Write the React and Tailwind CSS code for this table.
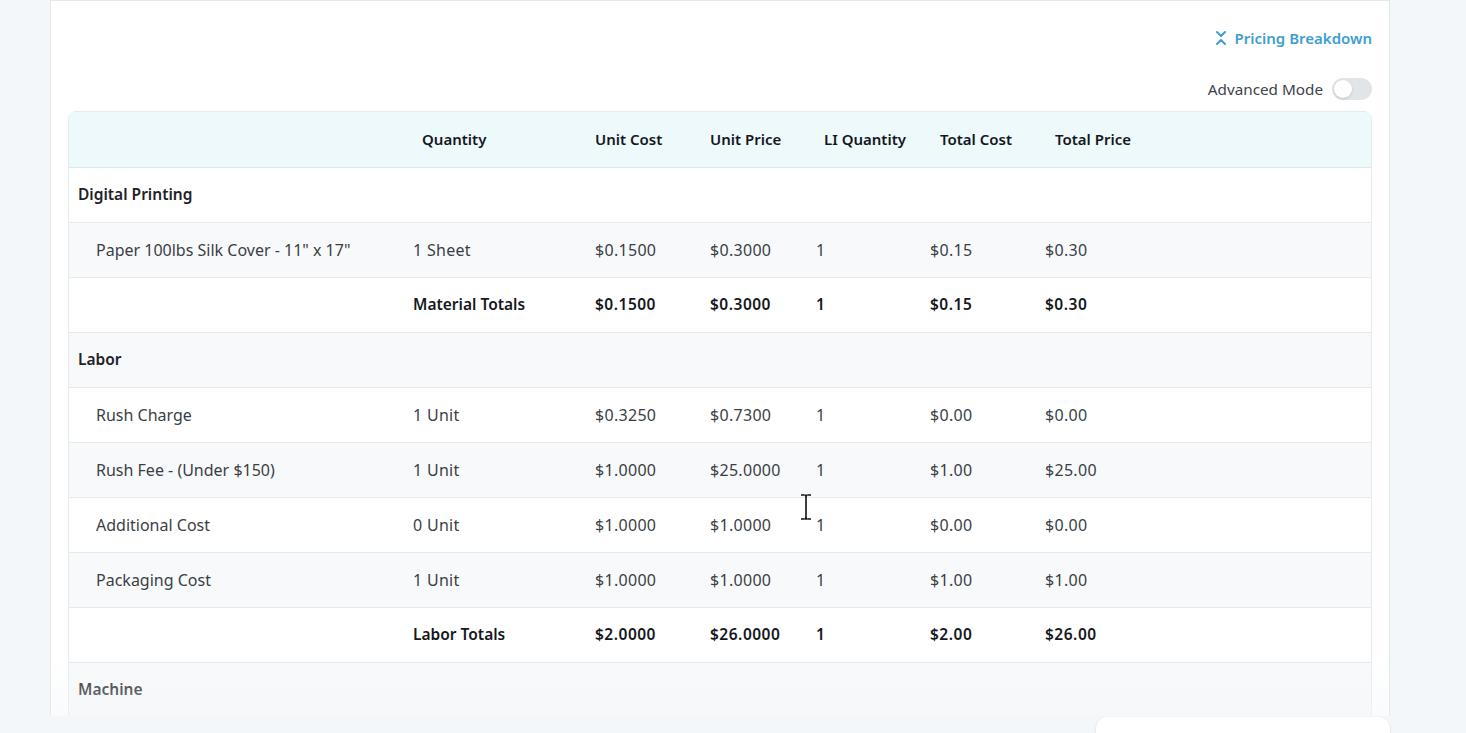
import React from "react";

const cols = "grid grid-cols-[334px_182px_115px_106px_114px_115px_1fr] content-center items-center";

const sections = [
  {
    title: "Digital Printing",
    items: [["Paper 100lbs Silk Cover - 11\" x 17\"", "1 Sheet", "$0.1500", "$0.3000", "1", "$0.15", "$0.30"]],
    total: ["Material Totals", "$0.1500", "$0.3000", "1", "$0.15", "$0.30"],
  },
  {
    title: "Labor",
    items: [
      ["Rush Charge", "1 Unit", "$0.3250", "$0.7300", "1", "$0.00", "$0.00"],
      ["Rush Fee - (Under $150)", "1 Unit", "$1.0000", "$25.0000", "1", "$1.00", "$25.00"],
      ["Additional Cost", "0 Unit", "$1.0000", "$1.0000", "1", "$0.00", "$0.00"],
      ["Packaging Cost", "1 Unit", "$1.0000", "$1.0000", "1", "$1.00", "$1.00"],
    ],
    total: ["Labor Totals", "$2.0000", "$26.0000", "1", "$2.00", "$26.00"],
  },
  { title: "Machine", items: [], total: null },
];

// flatten into rows so striping follows the row index
function buildRows() {
  const rows = [];
  sections.forEach((s) => {
    rows.push({ kind: "title", text: s.title });
    s.items.forEach((it) => rows.push({ kind: "item", cells: it }));
    if (s.total) rows.push({ kind: "total", cells: s.total });
  });
  return rows;
}

function Row({ row, index }) {
  const bg = index % 2 === 1 ? "bg-[#f8f9fa]" : "bg-white";
  if (row.kind === "title") {
    return (
      <div className={`${bg} h-[55px] flex items-center px-[9px] border-b border-[#e6eaed] font-semibold text-[15.5px] text-[#1e2227]`}>
        {row.text}
      </div>
    );
  }
  if (row.kind === "item") {
    return (
      <div className={`${cols} ${bg} h-[55px] border-b border-[#e6eaed] text-[16px] text-[#3a3f46]`}>
        <div className="pl-[27px]">{row.cells[0]}</div>
        {row.cells.slice(1).map((c, i) => (
          <div key={i} className="px-[10px] tracking-[0.3px]">{c}</div>
        ))}
        <div />
      </div>
    );
  }
  return (
    <div className={`${cols} ${bg} h-[55px] border-b border-[#e6eaed] font-semibold text-[15.5px] text-[#15181c]`}>
      <div />
      {row.cells.map((c, i) => (
        <div key={i} className={i === 0 ? "px-[10px]" : "px-[10px] tracking-[0.5px]"}>{c}</div>
      ))}
      <div />
    </div>
  );
}

export default function App() {
  const rows = buildRows();
  return (
    <div className="relative h-[733px] overflow-hidden bg-[#f3f7f9] font-['Noto_Sans',sans-serif] text-[15px]">
      <div className="relative ml-[50px] w-[1340px] h-[716px] bg-white border-x border-t border-[#e4e9ec] overflow-hidden">
        <div className="px-[17px]">
          {/* pricing breakdown link */}
          <div className="flex justify-end items-center h-[74px]">
            <button className="flex items-center gap-[8px] text-[#3d9fcf] font-semibold">
              <svg width="12" height="16" viewBox="0 0 12 16" fill="none" stroke="currentColor" strokeWidth="2" strokeLinecap="round" strokeLinejoin="round">
                <path d="M2 2l4 4 4-4" />
                <path d="M2 14l4-4 4 4" />
              </svg>
              Pricing Breakdown
            </button>
          </div>

          {/* advanced mode toggle */}
          <div className="flex justify-end items-center gap-[9px] h-[28px] mb-[8px]">
            <span className="text-[15.25px] text-[#3d434b]">Advanced Mode</span>
            <div className="w-[40px] h-[22px] rounded-full bg-[#e2e5e8] p-[2px] flex items-center">
              <div className="w-[18px] h-[18px] rounded-full bg-white shadow-sm" />
            </div>
          </div>

          {/* table */}
          <div className="border border-[#e3ebef] rounded-t-lg overflow-hidden">
            <div className={`${cols} h-[56px] bg-[#eef9fc] border-b border-[#d9e8ee] font-semibold text-[#15181c]`}>
              <div />
              <div className="pl-[19px]">Quantity</div>
              <div className="px-[10px]">Unit Cost</div>
              <div className="px-[10px]">Unit Price</div>
              <div className="pl-[18px]">LI Quantity</div>
              <div className="pl-[20px]">Total Cost</div>
              <div className="pl-[20px]">Total Price</div>
              <div />
            </div>
            {rows.map((r, i) => (
              <Row key={i} row={r} index={i} />
            ))}
          </div>
        </div>

        {/* mouse cursor */}
        <svg className="absolute left-[749px] top-[493px]" width="12" height="26" viewBox="0 0 12 26" fill="none" stroke="#111" strokeWidth="1.6">
          <path d="M1 1h3.5M7.5 1H11M6 2v22M1 25h3.5M7.5 25H11" />
          <path d="M4.5 1C5.5 1 6 1.5 6 2.5M7.5 1C6.5 1 6 1.5 6 2.5M4.5 25c1 0 1.5-.5 1.5-1.5M7.5 25c-1 0-1.5-.5-1.5-1.5" />
        </svg>

        {/* bottom fade */}
        <div className="absolute left-0 right-0 bottom-0 h-[60px] bg-gradient-to-b from-transparent to-[#f3f7f9]/50" />
      </div>

      <div className="absolute left-[1096px] top-[717px] w-[294px] h-[30px] bg-white rounded-t-xl shadow-sm" />
    </div>
  );
}
